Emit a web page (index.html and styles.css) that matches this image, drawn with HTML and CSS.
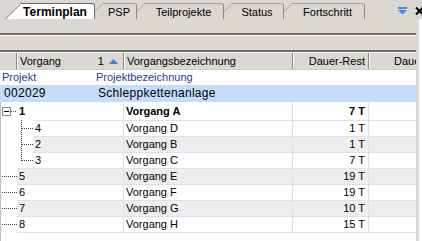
FILE: index.html
```html
<!DOCTYPE html>
<html lang="de">
<head>
  <meta charset="UTF-8">
  <title>Terminplan</title>
  <link rel="stylesheet" href="styles.css">
</head>
<body>
  <!-- Tabs -->
  <div class="tabbar">
    <div class="tab active t1">
      <svg class="slant" width="15" height="16"><polygon points="0,16 15,0 15,16" /><line x1="0" y1="16.5" x2="15.5" y2="1" /></svg>
      <span class="tab-label">Terminplan</span>
    </div>
    <div class="tab t2">
      <svg class="slant" width="15" height="16"><polygon points="0,16 15,0 15,16" /><line x1="0" y1="16.5" x2="15.5" y2="1" /></svg>
      <span class="tab-label">PSP</span>
    </div>
    <div class="tab t3">
      <svg class="slant" width="15" height="16"><polygon points="0,16 15,0 15,16" /><line x1="0" y1="16.5" x2="15.5" y2="1" /></svg>
      <span class="tab-label">Teilprojekte</span>
    </div>
    <div class="tab t4">
      <svg class="slant" width="15" height="16"><polygon points="0,16 15,0 15,16" /><line x1="0" y1="16.5" x2="15.5" y2="1" /></svg>
      <span class="tab-label">Status</span>
    </div>
    <div class="tab t5">
      <svg class="slant" width="15" height="16"><polygon points="0,16 15,0 15,16" /><line x1="0" y1="16.5" x2="15.5" y2="1" /></svg>
      <span class="tab-label">Fortschritt</span>
    </div>

    <div class="tools">
      <svg class="dropdown" width="9" height="8" viewBox="0 0 9 8"><rect x="0" y="0" width="9" height="2" /><polygon points="0,3 9,3 4.5,7.5" /></svg>
      <svg class="close" width="10" height="8" viewBox="0 0 10 8"><path d="M1 0.5 L8 7.5 M8 0.5 L1 7.5" /></svg>
    </div>
  </div>

  <div class="panel">
    <div class="main">
      <div class="band"></div>
      <div class="band"></div>

      <!-- Column headers -->
      <div class="head">
        <div class="hcell h-sel"></div>
        <div class="hcell h-id"><span>Vorgang</span><span class="sort">1 <svg width="9" height="5" viewBox="0 0 9 5"><polygon points="0,5 9,5 4.5,0" /></svg></span></div>
        <div class="hcell h-desc">Vorgangsbezeichnung</div>
        <div class="hcell h-dur">Dauer-Rest</div>
        <div class="hcell h-dau">Dauer</div>
      </div>

      <div class="proj-head">
        <span class="p-no">Projekt</span>
        <span>Projektbezeichnung</span>
      </div>
      <div class="proj">
        <span class="p-no">002029</span>
        <span>Schleppkettenanlage</span>
      </div>

      <div class="rows">
        <div class="row bold">
          <div class="indent root"><span class="expander"></span></div>
          <div class="cell c-id">1</div>
          <div class="cell c-desc">Vorgang A</div>
          <div class="cell c-dur">7 T</div>
          <div class="cell c-dau"></div>
        </div>
        <div class="row">
          <div class="indent child"></div>
          <div class="cell c-id">4</div>
          <div class="cell c-desc">Vorgang D</div>
          <div class="cell c-dur">1 T</div>
          <div class="cell c-dau"></div>
        </div>
        <div class="row alt">
          <div class="indent child"></div>
          <div class="cell c-id">2</div>
          <div class="cell c-desc">Vorgang B</div>
          <div class="cell c-dur">1 T</div>
          <div class="cell c-dau"></div>
        </div>
        <div class="row">
          <div class="indent child last"></div>
          <div class="cell c-id">3</div>
          <div class="cell c-desc">Vorgang C</div>
          <div class="cell c-dur">7 T</div>
          <div class="cell c-dau"></div>
        </div>
        <div class="row alt">
          <div class="indent leaf"></div>
          <div class="cell c-id">5</div>
          <div class="cell c-desc">Vorgang E</div>
          <div class="cell c-dur">19 T</div>
          <div class="cell c-dau"></div>
        </div>
        <div class="row">
          <div class="indent leaf"></div>
          <div class="cell c-id">6</div>
          <div class="cell c-desc">Vorgang F</div>
          <div class="cell c-dur">19 T</div>
          <div class="cell c-dau"></div>
        </div>
        <div class="row alt">
          <div class="indent leaf"></div>
          <div class="cell c-id">7</div>
          <div class="cell c-desc">Vorgang G</div>
          <div class="cell c-dur">10 T</div>
          <div class="cell c-dau"></div>
        </div>
        <div class="row lastrow">
          <div class="indent leaf"></div>
          <div class="cell c-id">8</div>
          <div class="cell c-desc">Vorgang H</div>
          <div class="cell c-dur">15 T</div>
          <div class="cell c-dau"></div>
        </div>
      </div>
    </div>
    <div class="edge"></div>
  </div>
</body>
</html>
```

FILE: styles.css
```css
body {
  margin: 0;
  width: 422px;
  height: 241px;
  overflow: hidden;
  background: #fff;
  font-family: "Liberation Sans", Arial, sans-serif;
  font-size: 11px;
  color: #000;
}

/* Tabs */
.tabbar {
  display: flex;
  align-items: flex-end;
  height: 19px;
  padding-left: 5px;
  background: #dbd7d1;
  overflow: hidden;
}
.tab {
  display: flex;
  height: 16px;
  margin-left: -8px;
  position: relative;
}
.tab.t1 { margin-left: 0; z-index: 6; }
.t2 { z-index: 4; }
.t3 { z-index: 3; }
.t4 { z-index: 2; }
.t5 { z-index: 1; }
.slant {
  display: block;
  flex: none;
}
.slant polygon {
  fill: #dbd7d1;
}
.slant line {
  stroke: #a3a09b;
  stroke-width: 1;
}
.tab-label {
  display: block;
  height: 16px;
  line-height: 16px;
  box-sizing: border-box;
  text-align: center;
  background: #dbd7d1;
  border-top: 1px solid #a3a09b;
  border-right: 1px solid #8f8c87;
  border-top-right-radius: 3px;
}
.t1 .tab-label { width: 75px; padding-right: 4px; }
.t2 .tab-label { width: 35px; }
.t3 .tab-label { width: 80px; }
.t4 .tab-label { width: 53px; }
.t5 .tab-label { width: 74px; }
.tab.active .slant polygon { fill: #fff; }
.tab.active .slant line { stroke: #6b6b6b; }
.tab.active .tab-label {
  background: #fff;
  border-top-color: #6b6b6b;
  border-right-color: #6b6b6b;
  font-weight: bold;
  font-size: 12px;
}
.tools {
  display: flex;
  align-self: flex-start;
  margin-left: auto;
  margin-top: 7px;
  gap: 8px;
  margin-right: -3px;
}
.dropdown { fill: #3a8fe2; }
.close path {
  stroke: #000;
  stroke-width: 2;
  fill: none;
}

/* Panel */
.panel {
  display: flex;
  height: 222px;
}
.main {
  width: 416px;
  overflow: hidden;
  flex: none;
}
.edge {
  width: 3px;
  background: #dcd8e1;
}
.band {
  height: 14px;
  background: #dbd7d1;
  border-bottom: 2px solid #6e6e6e;
}
.band + .band {
  border-top: 1px solid #fff;
}

/* Header */
.head {
  display: flex;
  height: 18px;
  background: #dbd7d1;
  border-bottom: 1px solid #cfcbc5;
  border-top: 1px solid #fff;
  box-sizing: border-box;
  white-space: nowrap;
}
.hcell {
  box-sizing: border-box;
  flex: none;
  line-height: 16px;
  padding: 0 3px;
  border-left: 1px solid #fff;
  border-right: 1px solid #8a8884;
  overflow: hidden;
}
.h-sel { width: 17px; border-left: none; }
.h-id {
  width: 107px;
  display: flex;
  justify-content: space-between;
  padding-left: 2px;
  padding-right: 5px;
}
.sort svg {
  fill: #3b7fd8;
  margin-left: 2px;
  vertical-align: 1px;
}
.h-desc { width: 169px; padding-left: 2px; }
.h-dur { width: 76px; text-align: right; }
.h-dau { width: 58px; text-align: right; border-right: none; }

/* Project */
.proj-head {
  display: flex;
  height: 15px;
  line-height: 15px;
  color: #1f3c9b;
  padding-left: 2px;
}
.p-no { width: 94px; }
.proj {
  display: flex;
  height: 17px;
  line-height: 17px;
  background: #c7dbfb;
  font-size: 12px;
  letter-spacing: 0.3px;
  padding-left: 4px;
}
.proj .p-no { width: 94px; }

/* Rows */
.rows {
  border-left: 1px solid #c3c0c8;
  height: 140px;
}
.row {
  display: flex;
  height: 16px;
  white-space: nowrap;
}
.row.bold {
  height: 18px;
  font-weight: bold;
}
.cell {
  box-sizing: border-box;
  flex: none;
  border-top: 1px solid #e2e0e5;
  border-right: 1px solid #e2e0e5;
  line-height: 15px;
  padding: 0 2px;
}
.row.bold .cell { border-top-color: transparent; line-height: 17px; }
.lastrow .cell { border-bottom: 1px solid #e2e0e5; height: 17px; }
.alt .cell { background: #efedf0; }
.c-id { flex: 1; padding-left: 2px; }
.c-desc { width: 169px; }
.c-dur { width: 76px; text-align: right; padding-right: 3px; }
.c-dau { width: 47px; border-right: none; }

.indent {
  flex: none;
  width: 16px;
}
.indent.root {
  display: flex;
  align-items: center;
  background: repeating-linear-gradient(to right, #444 0 1px, transparent 1px 2px) 10px 9px / 6px 1px no-repeat;
}
.expander {
  width: 9px;
  height: 9px;
  box-sizing: border-box;
  margin-left: 1px;
  margin-top: 1px;
  border: 1px solid #8c8c8c;
  background: #fff linear-gradient(#000, #000) center / 5px 1px no-repeat;
}
.indent.child {
  width: 32px;
  background:
    repeating-linear-gradient(#444 0 1px, transparent 1px 2px) 20px 0 / 1px 16px no-repeat,
    repeating-linear-gradient(to right, #444 0 1px, transparent 1px 2px) 21px 8px / 11px 1px no-repeat;
}
.indent.child.last {
  background:
    repeating-linear-gradient(#444 0 1px, transparent 1px 2px) 20px 0 / 1px 9px no-repeat,
    repeating-linear-gradient(to right, #444 0 1px, transparent 1px 2px) 21px 8px / 11px 1px no-repeat;
}
.indent.leaf {
  background: repeating-linear-gradient(to right, #444 0 1px, transparent 1px 2px) 1px 8px / 15px 1px no-repeat;
}
```
